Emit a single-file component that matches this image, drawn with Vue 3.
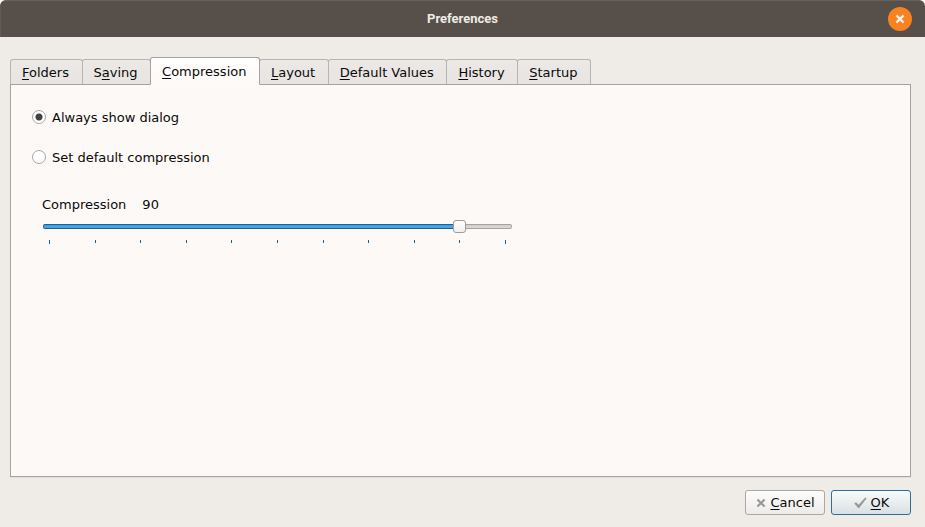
<script setup>
import { ref, computed } from 'vue'

const tabs = [
  { pre: '', key: 'F', post: 'olders' },
  { pre: 'S', key: 'a', post: 'ving' },
  { pre: '', key: 'C', post: 'ompression' },
  { pre: '', key: 'L', post: 'ayout' },
  { pre: '', key: 'D', post: 'efault Values' },
  { pre: '', key: 'H', post: 'istory' },
  { pre: '', key: 'S', post: 'tartup' },
]
const active = ref(2)
const mode = ref('dialog')
const level = ref(90)
// Centre of the handle, measured along the groove
const fill = computed(() => `calc(7px + (100% - 13px) * ${level.value / 100})`)
</script>

<template>
  <div class="window">
    <header class="titlebar">
      <h1>Preferences</h1>
      <button class="close" type="button" aria-label="Close">
        <svg width="10" height="10" viewBox="0 0 10 10" aria-hidden="true">
          <path d="M1.4 1.4 L8.6 8.6 M8.6 1.4 L1.4 8.6" stroke="#f3efea" stroke-width="2.2" fill="none" />
        </svg>
      </button>
    </header>

    <main class="body">
      <div class="tabs" role="tablist">
        <button
          v-for="(tab, i) in tabs"
          :key="i"
          class="tab"
          :class="{ selected: i === active }"
          type="button"
          role="tab"
          :aria-selected="i === active"
          @click="active = i"
        >{{ tab.pre }}<span class="key">{{ tab.key }}</span>{{ tab.post }}</button>
      </div>

      <section class="panel" role="tabpanel">
        <label class="option">
          <input v-model="mode" type="radio" name="mode" value="dialog" />
          <span>Always show dialog</span>
        </label>
        <label class="option">
          <input v-model="mode" type="radio" name="mode" value="default" />
          <span>Set default compression</span>
        </label>

        <div class="compression">
          <div class="caption">
            <label for="level">Compression</label>
            <output for="level">{{ level }}</output>
          </div>
          <input id="level" v-model.number="level" class="slider" type="range" min="0" max="100" :style="{ '--fill': fill }" />
          <div class="ticks" aria-hidden="true">
            <span v-for="n in 11" :key="n"></span>
          </div>
        </div>
      </section>

      <footer class="actions">
        <button class="btn" type="button">
          <svg width="10" height="10" viewBox="0 0 10 10" aria-hidden="true">
            <path d="M1.4 1.4 L8.6 8.6 M8.6 1.4 L1.4 8.6" stroke="#989795" stroke-width="2.1" fill="none" />
          </svg>
          <span><span class="key">C</span>ancel</span>
        </button>
        <button class="btn" :class="'primary'" type="button">
          <svg width="13" height="12" viewBox="0 0 13 12" aria-hidden="true">
            <path d="M0.3 6.6 L2 5.2 L4.6 7.8 L11.3 0.6 L12.7 1.3 L5.2 11 L4.2 11 Z" fill="#989a9a" />
          </svg>
          <span><span class="key">O</span>K</span>
        </button>
      </footer>
    </main>
  </div>
</template>

<style>
body {
  background: #fff;
}
</style>

<style scoped>
.window {
  display: flex;
  flex-direction: column;
  min-height: 100vh;
  box-sizing: border-box;
  font: 13px/16px "DejaVu Sans", sans-serif;
  color: #0a0a0a;
  background: #efebe7;
  border-radius: 6px 6px 0 0;
  overflow: hidden;
}
button {
  font: inherit;
  color: inherit;
  margin: 0;
  cursor: default;
}
.key {
  text-decoration: underline;
  text-decoration-thickness: 1px;
  text-underline-offset: 2px;
  text-decoration-skip-ink: none;
}
.titlebar {
  display: grid;
  grid-template-columns: 1fr auto 1fr;
  align-items: center;
  height: 37px;
  box-sizing: border-box;
  padding: 0 13px;
  background: #574f4a;
  border-radius: 6px 6px 0 0;
  box-shadow: inset 0 1px #68605b, inset 1px 0 #625a55;
}
.titlebar h1 {
  grid-column: 2;
  margin: 0;
  font: bold 13px/16px Roboto, sans-serif;
  color: #eeeae6;
}
.close {
  justify-self: end;
  display: flex;
  align-items: center;
  justify-content: center;
  width: 24px;
  height: 24px;
  padding: 0;
  border: 0;
  border-radius: 50%;
  background: #f98220;
}
.body {
  flex: 1;
  display: flex;
  flex-direction: column;
  padding: 20px 14px 12px 10px;
}
.tabs {
  display: flex;
  align-items: flex-end;
  width: 581px;
  height: 28px;
  margin-bottom: -1px;
}
.tab {
  flex: 1 0 auto;
  height: 26px;
  padding: 1px 11px 0;
  border: 1px solid #b7b4b1;
  border-bottom-color: #a6a3a0;
  border-radius: 3px 3px 0 0;
  background: linear-gradient(#ebe8e5, #e7e4e1);
  text-align: left;
  white-space: nowrap;
}
.tab + .tab {
  margin-left: -1px;
}
.tab.selected {
  z-index: 1;
  height: 28px;
  border-color: #a6a3a0;
  border-bottom-color: #fdf9f6;
  background: linear-gradient(#ffffff, #fdf9f6);
}
.panel {
  flex: 1;
  padding: 24px 20px;
  border: 1px solid #a6a3a0;
  background: #fdf9f6;
  box-shadow: 0 1px #e2dfdb;
}
.option {
  display: flex;
  align-items: center;
  gap: 6px;
  width: fit-content;
  height: 16px;
  margin-bottom: 24px;
  padding-left: 1px;
}
.option span {
  padding-top: 2px;
}
.option input {
  appearance: none;
  width: 14px;
  height: 14px;
  margin: 0;
  border: 1px solid #a9a6a3;
  border-radius: 50%;
  background: #fff;
}
.option input:checked {
  background: radial-gradient(circle, #414141 3px, #fff 4px);
}
.compression {
  width: 469px;
  max-width: 100%;
  margin: 32px 0 0 12px;
}
.caption {
  display: flex;
  gap: 16px;
  margin-left: -1px;
}
.slider {
  --fill: 0px;
  appearance: none;
  display: block;
  width: 100%;
  height: 13px;
  margin: 7px 0;
  background: none;
}
.slider::-webkit-slider-runnable-track {
  height: 5px;
  border-radius: 2px;
  background:
    linear-gradient(#1f618c 1px, #3d9fe0 1px, #48aaec 4px, #1f618c 4px) 0 0 / var(--fill) 100% no-repeat,
    linear-gradient(#a6a3a0 1px, #d0ccc9 1px, #dedad7 4px, #a6a3a0 4px);
  box-shadow: inset 1px 0 #1f618c, inset -1px 0 #a6a3a0;
}
.slider::-webkit-slider-thumb {
  appearance: none;
  width: 13px;
  height: 13px;
  margin-top: -4px;
  border: 1px solid #9f9c99;
  border-radius: 3px;
  background: linear-gradient(#ffffff, #f1f0ef);
}
.ticks {
  display: flex;
  justify-content: space-between;
  padding: 0 6px;
}
.ticks span {
  width: 1px;
  height: 3px;
  background: #1f618c;
}
.ticks span:first-child,
.ticks span:last-child {
  height: 4px;
}
.actions {
  display: flex;
  justify-content: flex-end;
  gap: 6px;
  margin-top: 13px;
}
.btn {
  display: flex;
  align-items: center;
  justify-content: center;
  gap: 4px;
  width: 80px;
  height: 25px;
  padding: 0 0 0 1px;
  border: 1px solid #aaa7a4;
  border-radius: 3px;
  background: linear-gradient(#fdfdfc, #edebe9);
}
.btn.primary {
  border-color: #2a709c;
  background: linear-gradient(#f9fbfb, #d9e0e3);
}
</style>
